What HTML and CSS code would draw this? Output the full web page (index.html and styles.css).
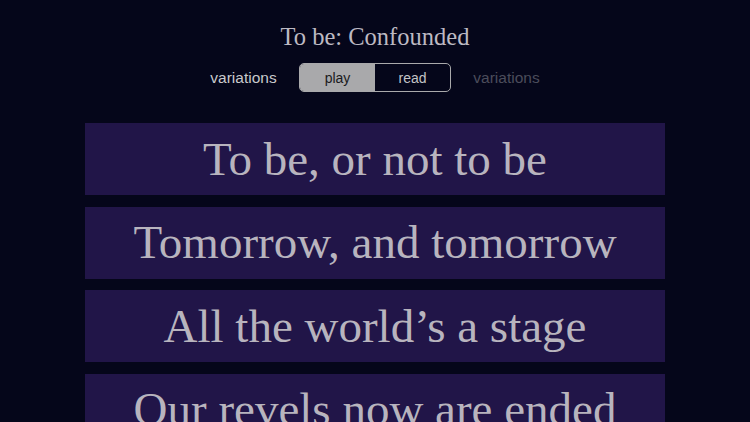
FILE: index.html
```html
<!DOCTYPE html>
<html>
<head>
<meta charset="utf-8">
<link rel="stylesheet" href="styles.css">
</head>
<body>
<div class="page">
  <h1 class="title">To be: Confounded</h1>
  <div class="controls">
    <span class="label">variations</span>
    <div class="segmented">
      <div class="seg active">play</div>
      <div class="seg">read</div>
    </div>
    <span class="label dim">variations</span>
  </div>
  <div class="list">
    <div class="card">To be, or not to be</div>
    <div class="card">Tomorrow, and tomorrow</div>
    <div class="card">All the world’s a stage</div>
    <div class="card">Our revels now are ended</div>
  </div>
</div>
</body>
</html>
```
FILE: styles.css
```css
html, body {
  margin: 0;
  padding: 0;
  background: #05061a;
  width: 750px;
  height: 422px;
  overflow: hidden;
}
.page {
  display: flex;
  flex-direction: column;
  align-items: center;
}
.title {
  margin: 22px 0 0 0;
  height: 30px;
  line-height: 30px;
  font-family: "Liberation Serif", serif;
  font-weight: normal;
  font-size: 24.5px;
  color: #bdb9c2;
}
.controls {
  margin-top: 11px;
  display: flex;
  align-items: center;
  gap: 22px;
  font-family: "Liberation Sans", Arial, sans-serif;
}
.label {
  font-size: 15.5px;
  color: #c9c9cc;
  width: 67px;
  text-align: center;
}
.label.dim {
  color: #4b4c5a;
}
.segmented {
  display: flex;
  width: 152px;
  height: 29px;
  box-sizing: border-box;
  border: 1px solid #a9a9ab;
  border-radius: 5px;
  overflow: hidden;
}
.seg {
  flex: 1;
  display: flex;
  align-items: center;
  justify-content: center;
  font-size: 14px;
  color: #c3c3c6;
}
.seg.active {
  background: #a9a9ab;
  color: #1b1b20;
}
.list {
  margin-top: 31px;
  display: flex;
  flex-direction: column;
  gap: 11.5px;
}
.card {
  width: 580px;
  height: 72px;
  background: #211548;
  display: flex;
  align-items: center;
  justify-content: center;
  font-family: "Liberation Serif", serif;
  font-size: 47px;
  color: #b8b4be;
  padding-bottom: 1px;
  box-sizing: border-box;
}
```
